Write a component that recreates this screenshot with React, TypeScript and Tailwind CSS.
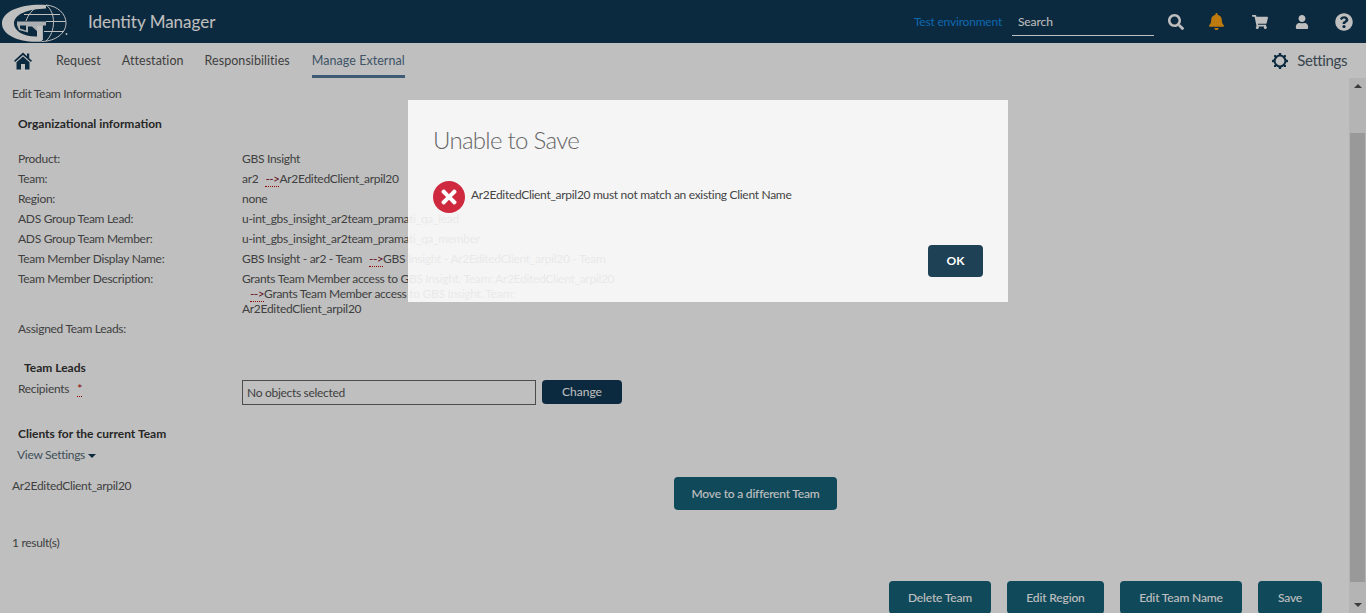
import { FaBell, FaQuestionCircle, FaSearch, FaShoppingCart, FaTimes, FaUser } from 'react-icons/fa';

const rows = [
    { label: 'Product:', value: <>GBS Insight</> },
    { label: 'Team:', value: <>ar2<Arrow />Ar2EditedClient_arpil20</> },
    { label: 'Region:', value: <>none</> },
    { label: 'ADS Group Team Lead:', value: <>u-int_gbs_insight_ar2team_pramati_qa_lead</> },
    { label: 'ADS Group Team Member:', value: <>u-int_gbs_insight_ar2team_pramati_qa_member</> },
    { label: 'Team Member Display Name:', value: <>GBS Insight - ar2 - Team<Arrow />GBS Insight - Ar2EditedClient_arpil20 - Team</> },
];

const navItems = ['Request', 'Attestation', 'Responsibilities'];

function Arrow() {
    return <span className="ml-[7px] border-b border-dotted border-[#c00000] leading-[12px] tracking-[-0.6px] text-[#8a2030]">--&gt;</span>;
}

function Logo() {
    return (
        <svg width="68" height="43" viewBox="0 0 68 43" className="shrink-0">
            {/* crescent of the G */}
            <path d="M46 5 C22 3.5 2 11 2 23.5 C2 36 22 43.5 42 41.5 L42 26 L37 26 L37 36.5 C24 37 14 31 14 23.5 C14 14 28 9 46 8.5 Z" fill="#ffffff" />
            {/* bar and stem inside the G */}
            <path d="M17 21.5 H46 V25.5 H43 V40 H38 V32 L32 26.5 H28 V32.5 L19 30 L17 25 Z" fill="#ffffff" fillOpacity="0.9" />
            <path d="M20 25.5 H26 V30.5 L20 28.5 Z" fill="#113854" />
            <g fill="none" stroke="#ffffff" strokeWidth="1">
                <path d="M46 5 C58 6 66 14 66 23 C66 33 56 41 42 41.5" />
                <path d="M46 5 C56 12 56 32 46 41" />
                <path d="M38 6 C32 10 28 15 26 21" />
                <path d="M24 14.5 H60" />
                <path d="M46 21.5 H65.5" />
                <path d="M44 31.5 H64" />
            </g>
            <circle cx="66.5" cy="34" r="0.9" fill="#ffffff" />
        </svg>
    );
}

function HomeIcon() {
    return (
        <svg width="18" height="18" viewBox="0 0 18 18" className="shrink-0" fill="#113854">
            <path d="M9 0.5 L13 4.2 V1.5 H15.2 V6.2 L18 8.8 L16.9 10 L9 2.9 L1.1 10 L0 8.8 Z" />
            <path d="M9 4.4 L15.5 10.2 V17.5 H11 V12 H7 V17.5 H2.5 V10.2 Z" />
        </svg>
    );
}

function Gear() {
    return (
        <svg width="16" height="16" viewBox="0 0 16 16" fill="none" className="shrink-0">
            <circle cx="8" cy="8" r="5.4" stroke="#113854" strokeWidth="2" />
            <g fill="#113854">
                <rect x="6.8" y="0" width="2.4" height="2.4" rx="0.6" />
                <rect x="6.8" y="13.6" width="2.4" height="2.4" rx="0.6" />
                <rect x="0" y="6.8" width="2.4" height="2.4" rx="0.6" />
                <rect x="13.6" y="6.8" width="2.4" height="2.4" rx="0.6" />
                <rect x="2" y="2" width="2.2" height="2.2" rx="0.6" />
                <rect x="11.8" y="2" width="2.2" height="2.2" rx="0.6" />
                <rect x="2" y="11.8" width="2.2" height="2.2" rx="0.6" />
                <rect x="11.8" y="11.8" width="2.2" height="2.2" rx="0.6" />
            </g>
        </svg>
    );
}

function ActionButton({ label, width }: { label: string; width: string }) {
    return (
        <button className={`${width} h-[33px] rounded-sm bg-[#156279] text-center text-[12px] font-medium tracking-[-0.15px] text-white`}>
            {label}
        </button>
    );
}

export default function App() {
    return (
        <div className="relative flex h-[613px] w-[1366px] flex-col overflow-hidden bg-white font-['Lato','Noto_Sans',sans-serif] text-[12px] tracking-[-0.3px] text-[#555]">
            <header className="flex h-[43px] shrink-0 items-center bg-[#113854] tracking-normal text-white">
                <Logo />
                <span className="ml-5 text-[17px] leading-none">Identity Manager</span>
                <span className="ml-auto text-[12px] tracking-[-0.2px] text-[#138be6]">Test environment</span>
                <div className="ml-[10px] flex h-[29px] w-[142px] items-center border-b border-white pl-[6px] pt-[1px] text-[12px] tracking-[-0.1px]">Search</div>
                <FaSearch size={16} className="ml-[14px]" />
                <FaBell size={17} className="ml-[24px] text-[#ffa313]" />
                <FaShoppingCart size={16} className="ml-[27px]" />
                <FaUser size={14} className="ml-[27px]" />
                <FaQuestionCircle size={18} className="ml-[26px] mr-[13px]" />
            </header>

            <nav className="flex h-[35px] shrink-0 items-center pl-[14px] pr-[19px] text-[12.5px] tracking-[0.05px] text-[#555]">
                <HomeIcon />
                <div className="ml-[24px] flex h-full items-stretch gap-[21px]">
                    {navItems.map((item) => (
                        <span key={item} className="flex items-center pt-[2px]">{item}</span>
                    ))}
                    <span className="ml-[1px] flex items-center border-b-[3px] border-[#54789d] pt-[5px] text-[#54708a]">Manage External</span>
                </div>
                <div className="ml-auto flex items-center gap-[9px]">
                    <Gear />
                    <span className="text-[15px] tracking-[-0.4px] text-[#4b5c69]">Settings</span>
                </div>
            </nav>

            <div className="flex min-h-0 flex-1">
                <main className="min-w-0 flex-1 pl-[12px]">
                    <div className="pt-[8px] leading-[16px]">Edit Team Information</div>

                    <div className="pl-[6px]">
                        <h2 className="mt-[14px] text-[12px] font-bold leading-[16px] tracking-normal text-[#333]">Organizational information</h2>
                        <div className="mt-[17px]">
                            {rows.map((row) => (
                                <div key={row.label} className="grid h-[20px] grid-cols-[224px_1fr] items-center whitespace-nowrap">
                                    <span>{row.label}</span>
                                    <span>{row.value}</span>
                                </div>
                            ))}
                            <div className="grid grid-cols-[224px_1fr] pt-[2px] pb-[3px] leading-[15px] whitespace-nowrap">
                                <span>Team Member Description:</span>
                                <div>
                                    <div>Grants Team Member access to GBS Insight. Team: Ar2EditedClient_arpil20</div>
                                    <div className="pl-[1px]"><Arrow />Grants Team Member access to GBS Insight. Team:</div>
                                    <div>Ar2EditedClient_arpil20</div>
                                </div>
                            </div>
                            <div className="h-[20px] leading-[20px]">Assigned Team Leads:</div>
                        </div>

                        <h2 className="mt-[19px] pl-[6px] font-bold leading-[20px] tracking-normal text-[#333]">Team Leads</h2>
                        <div className="grid grid-cols-[224px_294px_1fr] items-start">
                            <span className="pt-[1px] leading-[20px]">
                                Recipients<span className="ml-[8px] border-b border-dotted border-[#c00000] text-[#c00000]">*</span>
                            </span>
                            <div className="mt-[2px] flex h-[25px] items-center border border-[#666] pl-[4px]">No objects selected</div>
                            <button className="ml-[6px] mt-[2px] h-[24px] w-[80px] rounded-sm bg-[#113854] tracking-normal text-white">Change</button>
                        </div>

                        <h2 className="mt-[19px] font-bold leading-[20px] tracking-normal text-[#333]">Clients for the current Team</h2>
                        <div className="-ml-[1px] mt-[1px] flex h-[20px] items-center text-[#556a78]">
                            View Settings
                            <span className="ml-[3px] mt-[1px] border-x-[4px] border-t-[4px] border-x-transparent border-t-[#113854]" />
                        </div>
                    </div>

                    <div className="mt-[13px] flex items-start">
                        <span className="w-[662px] leading-[16px]">Ar2EditedClient_arpil20</span>
                        <button className="-mt-[1px] h-[33px] w-[163px] rounded-sm bg-[#156279] font-medium tracking-[-0.2px] text-white">Move to a different Team</button>
                    </div>

                    <div className="mt-[25px] leading-[16px]">1 result(s)</div>

                    <div className="mt-[30px] flex justify-end gap-[16px] pr-[27px]">
                        <ActionButton label="Delete Team" width="w-[102px]" />
                        <ActionButton label="Edit Region" width="w-[97px]" />
                        <ActionButton label="Edit Team Name" width="w-[122px]" />
                        <ActionButton label="Save" width="w-[64px]" />
                    </div>
                </main>

                <div className="flex w-[17px] shrink-0 flex-col items-center bg-[#f1f1f1]">
                    <span className="mt-[6px] border-x-[4px] border-b-[4px] border-x-transparent border-b-[#505050]" />
                    <div className="mt-[45px] h-[449px] w-[15px] bg-[#cdcdcd]" />
                    <span className="mt-[21px] border-x-[4px] border-t-[4px] border-x-transparent border-t-[#505050]" />
                </div>
            </div>

            <div className="absolute inset-0 bg-black/25" />

            <div className="absolute left-[408px] top-[100px] h-[202px] w-[600px] bg-[#fbfbfb]/90 px-[25px] pt-[24px]">
                <h1 className="text-[24px] font-light leading-[32px] tracking-[-0.7px] text-[#666]">Unable to Save</h1>
                <div className="mt-[25px] flex items-center gap-[6px]">
                    <span className="flex h-[32px] w-[32px] items-center justify-center rounded-full bg-[#cf293f] text-white">
                        <FaTimes size={22} />
                    </span>
                    <span className="-mt-[4px] text-[12px] text-[#444]">Ar2EditedClient_arpil20 must not match an existing Client Name</span>
                </div>
                <div className="mt-[32px] flex justify-end">
                    <button className="h-[32px] w-[55px] rounded-sm bg-[#1f4156] text-[12px] font-bold tracking-normal text-white">OK</button>
                </div>
            </div>
        </div>
    );
}
